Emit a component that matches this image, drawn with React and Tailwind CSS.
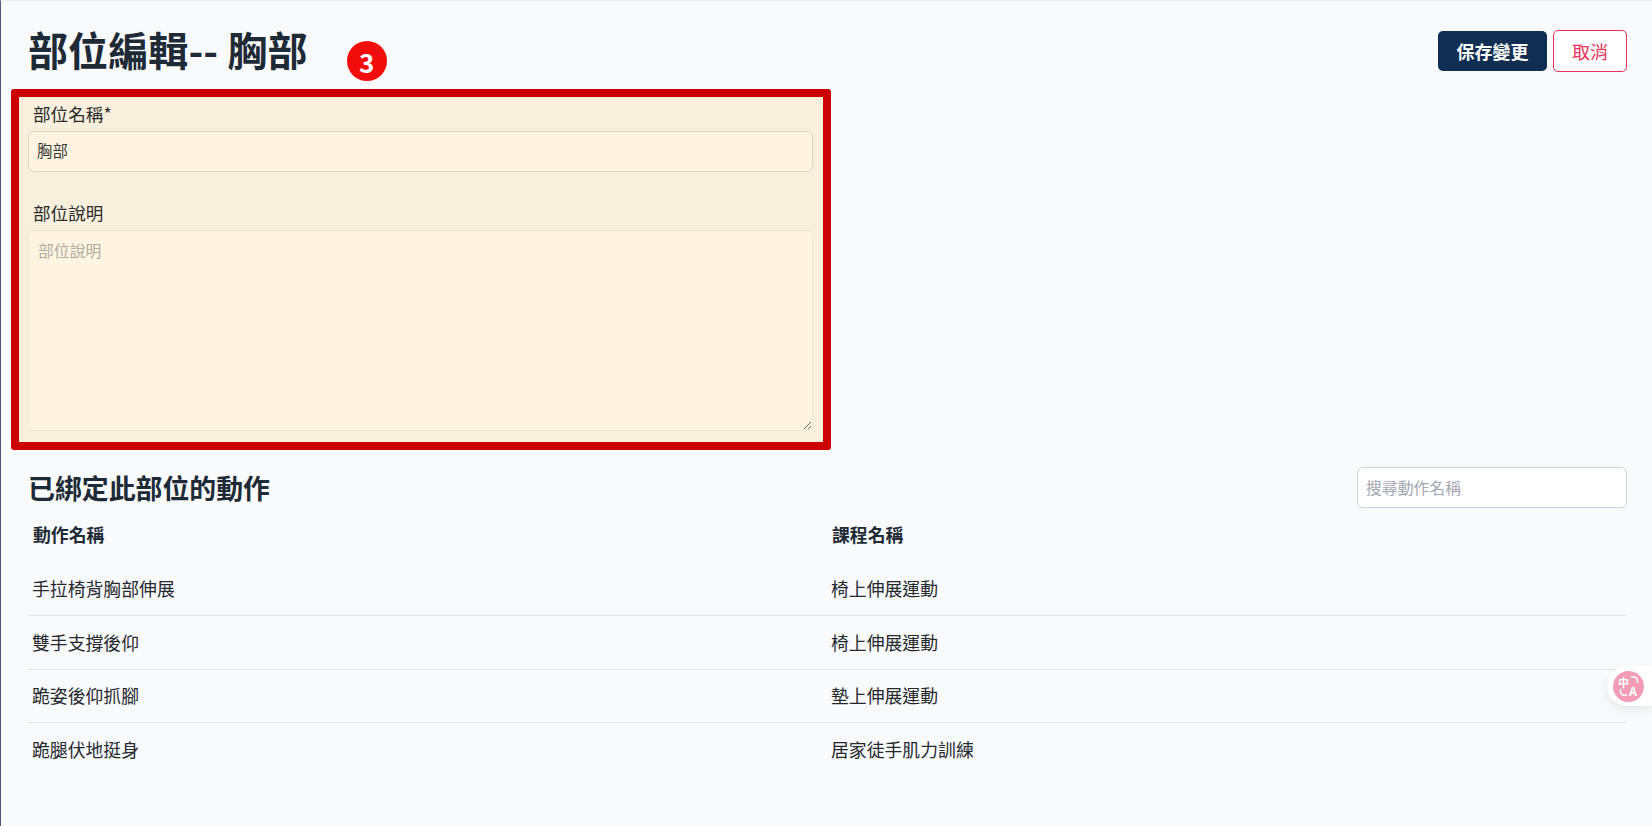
import React from "react";

const rows = [
  ["手拉椅背胸部伸展", "椅上伸展運動"],
  ["雙手支撐後仰", "椅上伸展運動"],
  ["跪姿後仰抓腳", "墊上伸展運動"],
  ["跪腿伏地挺身", "居家徒手肌力訓練"],
];

function TranslateWidget() {
  return (
    <div className="absolute right-0 top-[665px] flex h-10 w-[45px] items-center rounded-l-[20px] bg-white pl-[6px] shadow-[0_4px_10px_rgba(0,0,0,0.08)]">
      <svg width="31" height="31" viewBox="0 0 31 31">
        <circle cx="15.5" cy="15.5" r="15.5" fill="#f29db5" />
        <text x="5" y="15.5" fontSize="11" fontWeight="700" fill="#fff" fontFamily="'Noto Sans CJK TC', sans-serif">中</text>
        <text x="16" y="25" fontSize="11.5" fontWeight="700" fill="#fff" fontFamily="'Noto Sans', sans-serif">A</text>
        <path d="M18.5 6h2.5a3.5 3.5 0 0 1 3.5 3.5v2" fill="none" stroke="#fff" strokeWidth="1.5" strokeLinecap="round" />
        <path d="M7.5 18.5v2a3.5 3.5 0 0 0 3.5 3.5h2.5" fill="none" stroke="#fff" strokeWidth="1.5" strokeLinecap="round" />
      </svg>
    </div>
  );
}

export default function App() {
  return (
    <div className="relative h-[826px] w-full overflow-hidden border-l border-t border-l-[#4d5b80] border-t-[#e9ecf3] bg-[#f9fafc] font-['Noto_Sans_CJK_TC',sans-serif] text-[17.6px] text-[#212529]">
      <div className="flex h-[88px] items-start justify-between pl-[27px] pr-[25px]">
        <div className="flex items-start">
          <h1 className="mt-[24px] text-[40px] leading-[48px] font-bold tracking-[0.1px] text-[#1e2b37]">部位編輯--&nbsp;胸部</h1>
          <span className="mt-10 ml-[39px] flex h-10 w-10 items-center justify-center rounded-full bg-[#f20d0d] text-[26px] font-semibold text-white">3</span>
        </div>
        <div className="mt-[29px] flex items-center gap-[6px] text-[18px]">
          <button className="h-10 w-[109px] rounded-[5px] bg-[#102e52] font-bold text-white">保存變更</button>
          <button className="h-[42px] w-[74px] rounded-[5px] border border-[#e8325a] bg-white text-[#e8325a]">取消</button>
        </div>
      </div>

      <section className="ml-[10px] h-[361px] w-[820px] rounded-[3px] border-[8px] border-[#cc0000] bg-[#f8efdc] pl-[9px] pr-[10px]">
        <label className="block pt-[4px] pl-[5px] leading-[26px] text-[#2b2b2b]">部位名稱*</label>
        <input
          readOnly
          value="胸部"
          className="mt-[4px] block h-[41px] w-full rounded-md border border-[#dcd5c6] bg-[#fff4e0] px-2 pb-[3px] text-[15.4px] text-[#3a3a3a] outline-none"
        />
        <label className="mt-[28px] block pl-[5px] leading-[26px] text-[#2b2b2b]">部位說明</label>
        <textarea
          readOnly
          placeholder="部位說明"
          className="mt-[4px] block h-[201px] w-full rounded-md border border-[#efe6d4] bg-[#fff4e0] px-[9px] py-[8px] text-[15.84px] outline-none placeholder:text-[#b0aca4]"
        />
      </section>

      <div className="flex items-center justify-between pr-[25px] pl-[27px] pt-[17px]">
        <h2 className="text-[26.9px] leading-[38px] font-bold text-[#1e2b37]">已綁定此部位的動作</h2>
        <input
          readOnly
          placeholder="搜尋動作名稱"
          className="h-[41px] w-[270px] rounded-md border border-[#ced1d9] bg-white pl-2 pr-2 text-[15.84px] outline-none placeholder:text-[#a3a7b2]"
        />
      </div>

      <table className="mt-[9px] ml-[27px] w-[1599px] table-fixed border-collapse text-[17.85px]">
        <thead>
          <tr className="h-[45px]">
            <th className="w-[803px] pl-[5px] pb-[10px] text-left font-bold text-[#212b36]">動作名稱</th>
            <th className="pl-px pb-[10px] text-left font-bold text-[#212b36]">課程名稱</th>
          </tr>
        </thead>
        <tbody>
          {rows.map((r, i) => (
            <tr key={i} className={i < rows.length - 1 ? "h-[53.5px] border-b border-[#e3e5ea]" : "h-[53.5px]"}>
              <td className="pl-[4px] text-[#26292e]">{r[0]}</td>
              <td className="text-[#26292e]">{r[1]}</td>
            </tr>
          ))}
        </tbody>
      </table>

      <TranslateWidget />
    </div>
  );
}
